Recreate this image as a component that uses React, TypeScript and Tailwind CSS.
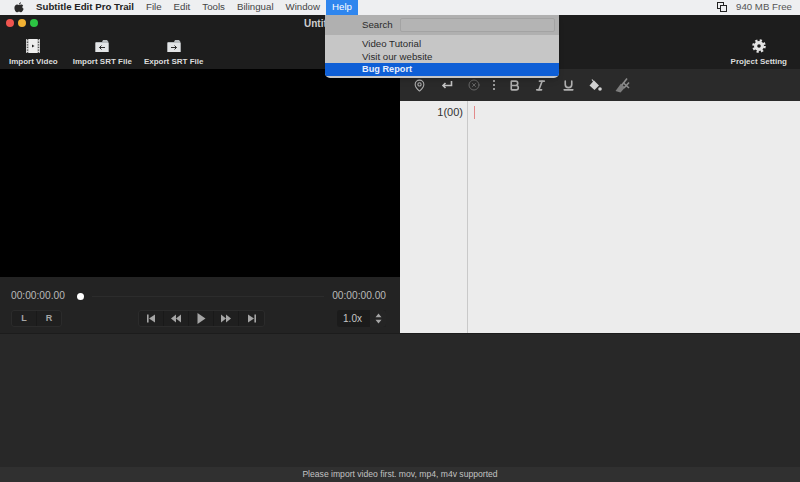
import { Bold, Italic, MapPin, Underline, XCircle } from 'lucide-react';
import type { ReactNode } from 'react';

const font = { fontFamily: '"Liberation Sans", Arial, sans-serif' };

const FileIcon = ({ arrow }: { arrow: string }) => (
  <svg width="14" height="14" viewBox="0 0 14 14">
    <path d="M0.5 3 H7 L8 1 H12 L13.5 3 V13 H0.5 Z" fill="#b9bdc0" />
    <rect x="0.5" y="4" width="13" height="9" fill="#e2e4e6" />
    <path d={arrow} stroke="#2a2a2a" strokeWidth="1" fill="none" />
  </svg>
);

const FilmIcon = () => (
  <svg width="14" height="14" viewBox="0 0 14 14">
    <rect width="14" height="14" fill="#d8d8d8" />
    <rect x="3" width="8" height="14" fill="#eeeeee" />
    <path d="M6 5.5 L8.5 7 L6 8.5 Z" fill="#222" />
    <path d="M1.5 0v14M12.5 0v14" stroke="#555" strokeWidth="1.4" strokeDasharray="1.3 1.3" />
  </svg>
);

const GearIcon = () => (
  <svg width="14" height="14" viewBox="0 0 14 14">
    <circle cx="7" cy="7" r="5" fill="#e4e4e4" />
    <circle cx="7" cy="7" r="5.6" fill="none" stroke="#e4e4e4" strokeWidth="2.4" strokeDasharray="2.2 2.2" />
    <circle cx="7" cy="7" r="1.8" fill="#1d1d1d" />
  </svg>
);

const ToolButton = ({ icon, label, className }: { icon: ReactNode; label: string; className: string }) => (
  <div className={`flex flex-col items-center gap-[3px] ${className}`}>
    <div className="flex h-[15px] items-center">{icon}</div>
    <span className="text-[8px] font-bold leading-[11px] text-[#dcdcdc] whitespace-nowrap">{label}</span>
  </div>
);

const TransportButton = ({ d, bordered = true }: { d: string; bordered?: boolean }) => (
  <div className={`flex h-full w-[25px] items-center justify-center ${bordered ? 'border-r border-[#191919]' : ''}`}>
    <svg width="12" height="11" viewBox="0 0 12 11">
      <path d={d} fill="#a5a5a5" />
    </svg>
  </div>
);

const menus = ['File', 'Edit', 'Tools', 'Bilingual', 'Window'];

const MenuBar = () => (
  <div className="flex h-[15px] items-center bg-[#eeeff1] text-[9.7px] text-[#444]">
    <svg className="ml-[14px]" width="10" height="11" viewBox="0 0 10 11">
      <path
        d="M7 0.3 C7 1.5 6 2.4 5 2.4 C5 1.2 6 0.4 7 0.3 Z M5 3 C5.6 3 6.3 2.5 7.2 2.5 C8 2.5 8.8 2.9 9.2 3.6 C8 4.3 8 6.2 9.6 6.8 C9.2 8.2 8 10.3 7 10.3 C6.2 10.3 5.9 9.8 5 9.8 C4.1 9.8 3.7 10.3 3 10.3 C1.8 10.3 0.4 8 0.4 6 C0.4 3.8 1.8 2.6 3.1 2.6 C3.9 2.6 4.5 3 5 3 Z"
        fill="#2b2b2b"
      />
    </svg>
    <span className="ml-[12px] font-bold text-[#222]">Subtitle Edit Pro Trail</span>
    <div className="ml-[12px] flex gap-[12px]">
      {menus.map((m) => (
        <span key={m}>{m}</span>
      ))}
    </div>
    <span className="ml-[6px] flex h-full w-[32px] items-center justify-center bg-[#2f86ee] text-white">Help</span>
    <div className="ml-auto mr-[8px] flex items-center gap-[9px] text-[#555]">
      <svg width="10" height="10" viewBox="0 0 10 10">
        <rect x="0.5" y="0.5" width="6" height="6" fill="none" stroke="#222" />
        <rect x="3.5" y="3.5" width="6" height="6" fill="#eeeff1" stroke="#222" />
      </svg>
      <span>940 MB Free</span>
    </div>
  </div>
);

const HelpMenu = () => (
  <div className="absolute left-[325px] top-[15px] z-10 h-[63px] w-[234px] overflow-hidden rounded-b-[5px] bg-[#c6c6c6] text-[9.7px] text-[#2a2a2a] shadow-md">
    <div className="flex h-[20px] items-center bg-[#b0b0b0] pl-[37px]">
      <span>Search</span>
      <div className="ml-[7px] h-[14px] w-[155px] rounded-[2px] border border-[#a3a3a3] bg-[#b4b4b4]" />
    </div>
    <div className="mt-[2px] pl-[37px] leading-[13px]">
      <div>Video Tutorial</div>
      <div>Visit our website</div>
    </div>
    <div className="bg-[#0f5fd6] pl-[37px] text-[9.2px] font-bold leading-[13px] text-[#e8eefc]">Bug Report</div>
  </div>
);

const Player = () => (
  <div className="flex h-[56px] flex-col bg-[#232323] pt-[12px] text-[#b9b9b9]">
    <div className="flex items-center pl-[11px] pr-[14px] text-[10.2px] leading-[14px]">
      <span className="w-[66px]">00:00:00.00</span>
      <div className="h-[7px] w-[7px] rounded-full bg-white" />
      <div className="mx-[8px] h-px flex-1 bg-[#2c2c2c]" />
      <span>00:00:00.00</span>
    </div>
    <div className="mt-[7px] flex items-center pl-[11px] pr-[14px]">
      <div className="flex h-[17px] w-[51px] rounded-[3px] border border-[#2b2b2b] bg-[#1f1f1f] text-[9px] font-bold text-[#a5a5a5]">
        <span className="flex flex-1 items-center justify-center border-r border-[#191919]">L</span>
        <span className="flex flex-1 items-center justify-center">R</span>
      </div>
      <div className="ml-[76px] flex h-[17px] rounded-[3px] border border-[#2b2b2b] bg-[#1f1f1f]">
        <TransportButton d="M2 1.5h1.6v8H2Z M10 1.5v8L4 5.5Z" />
        <TransportButton d="M6 1.5v8L1 5.5Z M11 1.5v8L6 5.5Z" />
        <TransportButton d="M2.5 0v11l8-5.5Z" />
        <TransportButton d="M1 1.5v8l5-4Z M6 1.5v8l5-4Z" />
        <TransportButton d="M2 1.5v8l6-4Z M8.4 1.5H10v8H8.4Z" bordered={false} />
      </div>
      <div className="ml-auto flex h-[17px] w-[49px] items-center overflow-hidden rounded-[3px] bg-[#1b1b1b]">
        <span className="flex-1 pr-[2px] text-center text-[10px] text-[#c5c5c5]">1.0x</span>
        <div className="flex h-full w-[16px] items-center justify-center bg-[#242424]">
          <svg width="7" height="11" viewBox="0 0 7 11">
            <path d="M3.5 0.5 6.5 4.2H0.5Z M3.5 10.5 6.5 6.8H0.5Z" fill="#a5a5a5" />
          </svg>
        </div>
      </div>
    </div>
  </div>
);

const Bucket = () => (
  <svg width="14" height="13" viewBox="0 0 14 13">
    <path d="M6 1.5 11 6.5 6.5 11 1.5 6.5 Z" fill="#d2d2d2" />
    <path d="M4 0.5 6 3" stroke="#d2d2d2" strokeWidth="1.2" />
    <circle cx="12" cy="10" r="1.8" fill="#d2d2d2" />
  </svg>
);

const Broom = () => (
  <svg width="15" height="15" viewBox="0 0 15 15">
    <path d="M0.5 13 L6 5.5 L10 9.5 L5.5 14.5 Z" fill="#7d7d7d" />
    <path d="M7 7 L12 0.5" stroke="#8c8c8c" strokeWidth="1.6" />
    <path d="M8 4.5 L14 10 M14 4.5 L9 10" stroke="#8c8c8c" strokeWidth="1.6" />
  </svg>
);

const Editor = () => (
  <div className="flex flex-1 flex-col">
    <div className="flex h-[32px] items-center bg-[#2a2a2a] pl-[13px] text-[#b0b0b0]">
      <MapPin size={13} strokeWidth={2} />
      <svg className="ml-[15px]" width="12" height="10" viewBox="0 0 12 10">
        <path d="M10.5 1v4.5H2M4.5 3 2 5.5 4.5 8" fill="none" stroke="#c4c4c4" strokeWidth="1.6" />
      </svg>
      <XCircle size={12} strokeWidth={2} className="ml-[15px] text-[#666]" />
      <div className="ml-[13px] flex h-[10px] flex-col justify-between">
        <span className="h-[2px] w-[2px] bg-[#999]" />
        <span className="h-[2px] w-[2px] bg-[#999]" />
        <span className="h-[2px] w-[2px] bg-[#999]" />
      </div>
      <Bold size={13} strokeWidth={3} className="ml-[13px]" />
      <Italic size={13} strokeWidth={3} className="ml-[13px]" />
      <Underline size={13} strokeWidth={3} className="ml-[15px]" />
      <div className="ml-[13px]">
        <Bucket />
      </div>
      <div className="ml-[13px]">
        <Broom />
      </div>
    </div>
    <div className="flex flex-1 bg-[#ececec]">
      <div className="w-[68px] border-r border-[#c9c9c9] pr-[4px] pt-[4px] text-right text-[11px] leading-[14px] text-[#333]">1(00)</div>
      <div className="ml-[6px] mt-[5px] h-[13px] w-px bg-[#e28a8a]" />
    </div>
  </div>
);

export default function App() {
  return (
    <div className="relative flex h-[482px] w-[800px] flex-col overflow-hidden bg-[#272727]" style={font}>
      <MenuBar />
      <HelpMenu />
      <div className="relative flex h-[54px] bg-[#1d1d1d]">
        <div className="absolute left-[6px] top-[4px] flex gap-[4px]">
          <span className="h-[8px] w-[8px] rounded-full bg-[#f0554f]" />
          <span className="h-[8px] w-[8px] rounded-full bg-[#f2b233]" />
          <span className="h-[8px] w-[8px] rounded-full bg-[#2cc443]" />
        </div>
        <span className="absolute left-[304px] top-[3px] text-[10px] font-bold leading-[12px] text-[#cfcfcf]">Untitled</span>
        <div className="flex w-full items-start pt-[23px]">
          <ToolButton className="ml-[9px]" icon={<FilmIcon />} label="Import Video" />
          <ToolButton className="ml-[15px]" icon={<FileIcon arrow="M10 8.5H4.5M6.5 6.5l-2 2 2 2" />} label="Import SRT File" />
          <ToolButton className="ml-[12px]" icon={<FileIcon arrow="M4 8.5h5.5M7.5 6.5l2 2-2 2" />} label="Export SRT File" />
          <ToolButton className="ml-auto mr-[13px]" icon={<GearIcon />} label="Project Setting" />
        </div>
      </div>
      <div className="flex h-[264px]">
        <div className="flex w-[400px] flex-col">
          <div className="flex-1 bg-black" />
          <Player />
        </div>
        <Editor />
      </div>
      <div className="flex-1 border-t border-[#1c1c1c] bg-[#282828]" />
      <div className="flex h-[15px] items-center justify-center bg-[#303030] text-[8.6px] text-[#c2c2c2]">
        Please import video first. mov, mp4, m4v supported
      </div>
    </div>
  );
}
